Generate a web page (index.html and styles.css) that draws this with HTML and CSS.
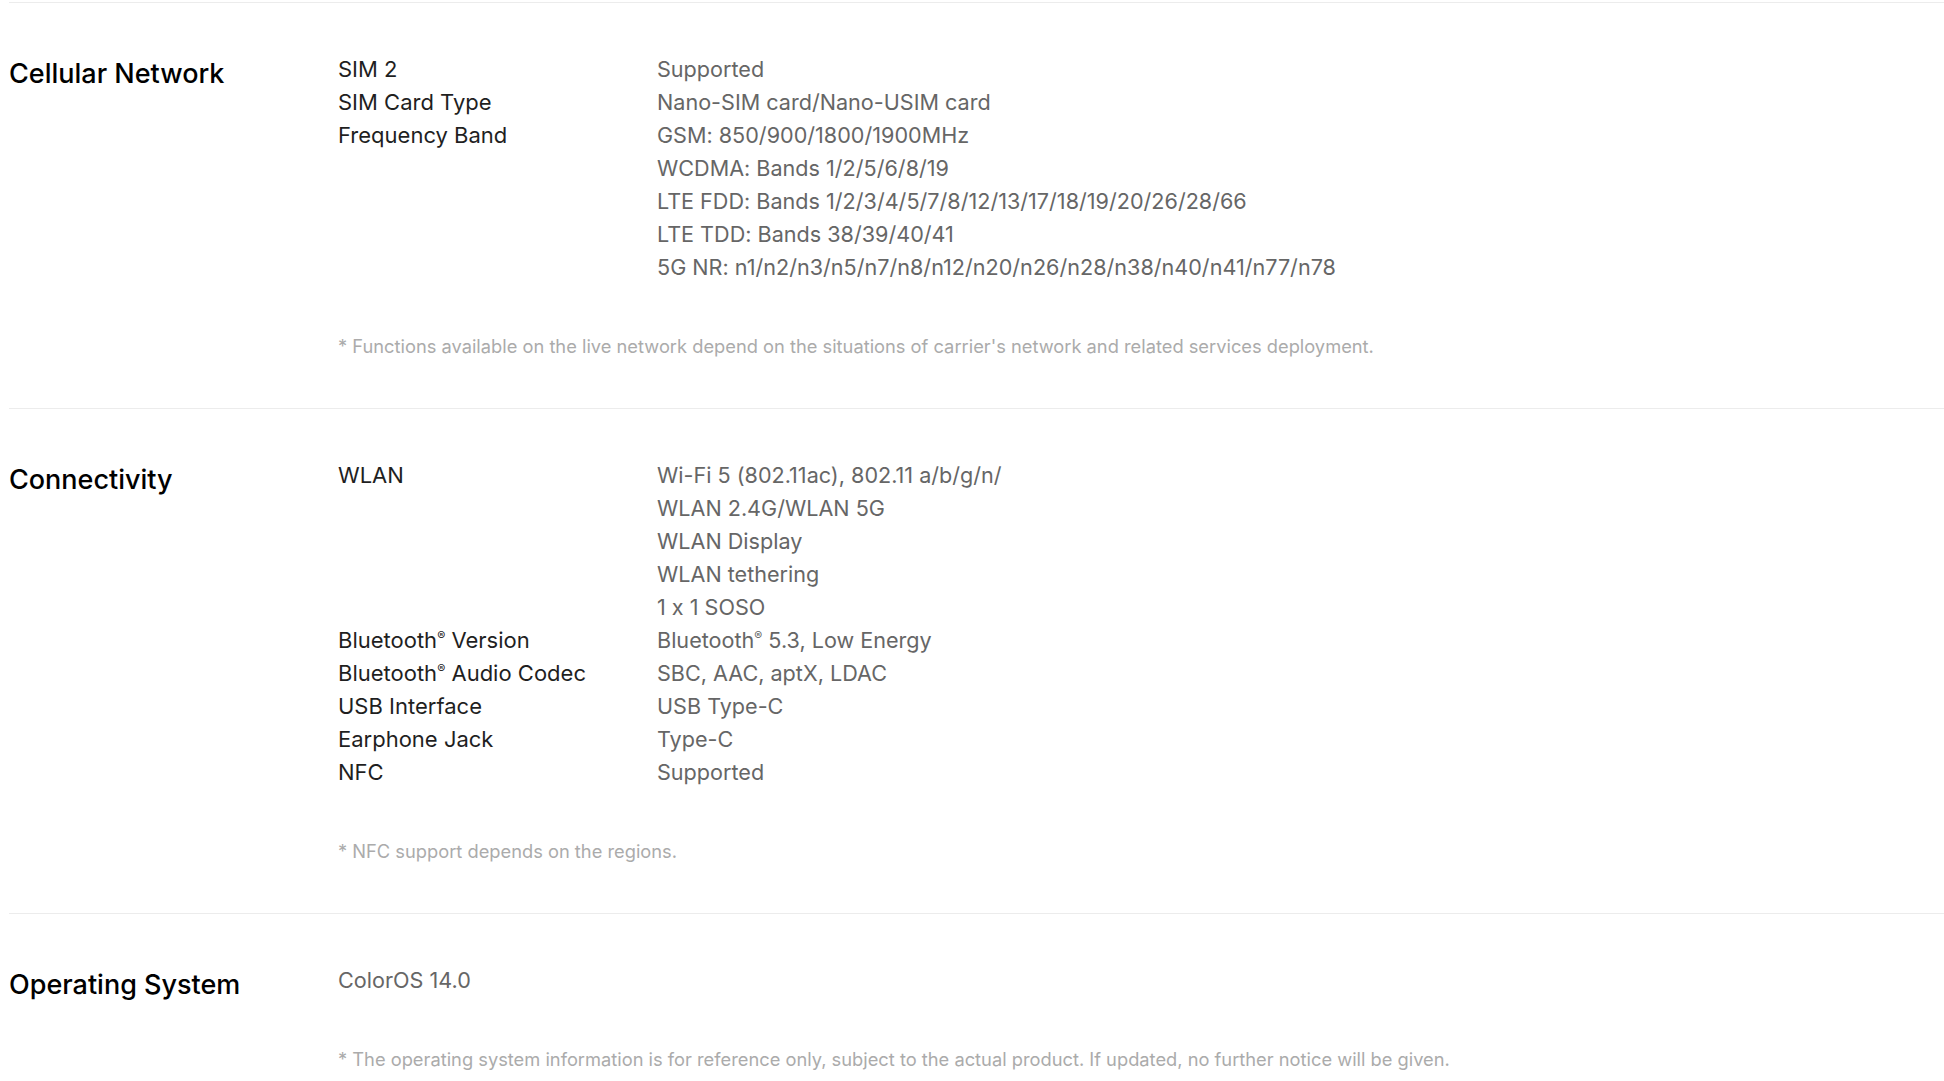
FILE: index.html
```html
<!DOCTYPE html>
<html lang="en">
<head>
<meta charset="utf-8">
<title>Specs</title>
<link rel="stylesheet" href="styles.css">
</head>
<body>
<div class="specs">
  <section class="spec">
    <h3 class="spec-title">Cellular Network</h3>
    <div class="spec-body">
      <div class="spec-list">
        <div class="spec-row"><div class="spec-label">SIM 2</div><div class="spec-value"><p>Supported</p></div></div>
        <div class="spec-row"><div class="spec-label">SIM Card Type</div><div class="spec-value"><p>Nano-SIM card/Nano-USIM card</p></div></div>
        <div class="spec-row"><div class="spec-label">Frequency Band</div><div class="spec-value">
          <p>GSM: 850/900/1800/1900MHz</p>
          <p>WCDMA: Bands 1/2/5/6/8/19</p>
          <p>LTE FDD: Bands 1/2/3/4/5/7/8/12/13/17/18/19/20/26/28/66</p>
          <p>LTE TDD: Bands 38/39/40/41</p>
          <p>5G NR: n1/n2/n3/n5/n7/n8/n12/n20/n26/n28/n38/n40/n41/n77/n78</p>
        </div></div>
      </div>
      <p class="spec-note">* Functions available on the live network depend on the situations of carrier's network and related services deployment.</p>
    </div>
  </section>
  <section class="spec">
    <h3 class="spec-title">Connectivity</h3>
    <div class="spec-body">
      <div class="spec-list">
        <div class="spec-row"><div class="spec-label">WLAN</div><div class="spec-value">
          <p>Wi-Fi 5 (802.11ac), 802.11 a/b/g/n/</p>
          <p>WLAN 2.4G/WLAN 5G</p>
          <p>WLAN Display</p>
          <p>WLAN tethering</p>
          <p>1 x 1 SOSO</p>
        </div></div>
        <div class="spec-row"><div class="spec-label">Bluetooth<sup>®</sup> Version</div><div class="spec-value"><p>Bluetooth<sup>®</sup> 5.3, Low Energy</p></div></div>
        <div class="spec-row"><div class="spec-label">Bluetooth<sup>®</sup> Audio Codec</div><div class="spec-value"><p>SBC, AAC, aptX, LDAC</p></div></div>
        <div class="spec-row"><div class="spec-label">USB Interface</div><div class="spec-value"><p>USB Type-C</p></div></div>
        <div class="spec-row"><div class="spec-label">Earphone Jack</div><div class="spec-value"><p>Type-C</p></div></div>
        <div class="spec-row"><div class="spec-label">NFC</div><div class="spec-value"><p>Supported</p></div></div>
      </div>
      <p class="spec-note">* NFC support depends on the regions.</p>
    </div>
  </section>
  <section class="spec spec-last">
    <h3 class="spec-title">Operating System</h3>
    <div class="spec-body">
      <div class="spec-list">
        <div class="spec-single"><p>ColorOS 14.0</p></div>
      </div>
      <p class="spec-note">* The operating system information is for reference only, subject to the actual product. If updated, no further notice will be given.</p>
    </div>
  </section>
</div>
</body>
</html>
```
FILE: styles.css
```css
html, body {
  margin: 0;
  padding: 0;
  background: #fff;
}

body {
  font-family: Inter, "Noto Sans", "Liberation Sans", sans-serif;
  font-feature-settings: "calt" 0;
  -webkit-font-smoothing: antialiased;
}

.specs {
  padding: 2px 0 0 9px;
}

.spec {
  display: grid;
  grid-template-columns: 329px 1fr;
  border-top: 1px solid #ececec;
  padding: 50px 0 48px;
}

.spec-last {
  padding-bottom: 0;
}

.spec-title {
  margin: 0;
  font-size: 27px;
  line-height: 42px;
  font-weight: 500;
  color: #000;
}

.spec-body {
  display: flex;
  flex-direction: column;
}

.spec-list {
  display: flex;
  flex-direction: column;
}

.spec-row {
  display: grid;
  grid-template-columns: 319px 1fr;
}

.spec-label {
  font-size: 22px;
  line-height: 33px;
  color: #1f1f1f;
  font-weight: 400;
}

.spec-value p,
.spec-single p {
  margin: 0;
  font-size: 21.6px;
  line-height: 33px;
  color: #666;
}

sup {
  font-size: 0.55em;
  line-height: 0;
  vertical-align: 0.7em;
}

.spec-note {
  margin: 49px 0 0;
  font-size: 18.3px;
  line-height: 27px;
  color: #ababab;
}
```
